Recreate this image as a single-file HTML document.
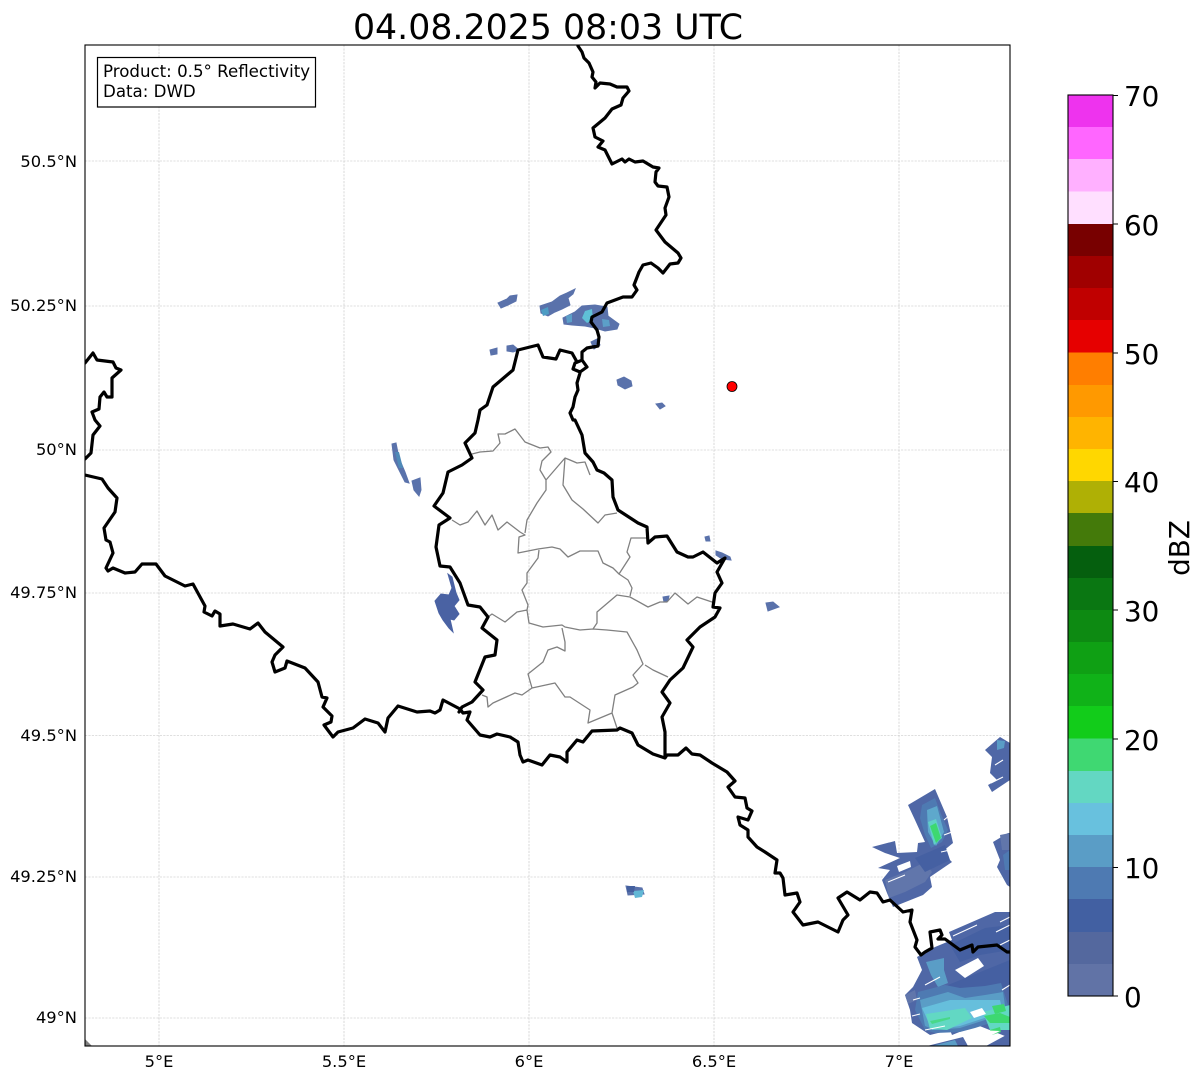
<!DOCTYPE html>
<html><head><meta charset="utf-8"><style>
html,body{margin:0;padding:0;background:#fff;width:1202px;height:1081px;overflow:hidden}
svg{display:block}
text{font-family:"DejaVu Sans",sans-serif;fill:#000}
.b{fill:none;stroke:#000;stroke-width:3.2;stroke-linejoin:round;stroke-linecap:round}
.g{fill:none;stroke:#808080;stroke-width:1.3;stroke-linejoin:round}
.w{stroke:#fff;stroke-width:1.1;fill:none}
</style></head><body>
<svg width="1202" height="1081" viewBox="0 0 1202 1081" xmlns="http://www.w3.org/2000/svg">
<defs><clipPath id="ax"><rect x="85" y="45" width="925" height="1001"/></clipPath></defs>
<rect width="1202" height="1081" fill="#fff"/>
<text x="548" y="39" font-size="34.76" text-anchor="middle">04.08.2025 08:03 UTC</text>

<g stroke="#c0c0c0" stroke-width="0.6" stroke-dasharray="2.2 1.2" fill="none">
<path d="M159 45V1046M344 45V1046M529 45V1046M714 45V1046M899 45V1046"/>
<path d="M85 161H1010M85 306H1010M85 450H1010M85 593H1010M85 735.5H1010M85 877H1010M85 1018H1010"/>
</g>

<g clip-path="url(#ax)">
<!-- radar small echoes -->
<g fill="#5a72ab" stroke="#5a72ab" stroke-width="1">
<path d="M498 303L507 299 510 296 517 295 516 301 508 305 501 308Z"/>
<path d="M540 306L552 302 560 296 567 293 575 289 573 294 568 298 570 305 562 309 555 312 548 316 541 313Z"/>
<path d="M563 318L575 312 582 306 595 305 607 307 608 316 619 324 617 329 605 331 595 328 585 326 572 325 564 324Z"/>
<path d="M591 342L597 339 600 345 594 349Z"/>
<path d="M490 350L497 348 497 354 491 355Z"/>
<path d="M507 346L513 345 519 350 513 352 507 351Z"/>
<path d="M617 380L624 377 631 381 632 386 625 389 618 385Z"/>
<path d="M656 404L662 403 665 406 660 409Z"/>
<path d="M392 444L396 443 399 458 405 472 409 483 405 482 399 470 394 460Z"/>
<path d="M412 481L420 478 421 490 419 496 414 490Z"/>
<path d="M705 537L709 536 710 541 706 541Z"/>
<path d="M716 551L722 553 730 557 731 560 722 559 716 555Z"/>
<path d="M663 597L669 596 668 601 664 602Z"/>
<path d="M766 603L773 602 779 607 768 611Z"/>
<path d="M626 886L642 888 644 894 628 895Z"/>
</g>
<g fill="#4a62a3" stroke="#4a62a3" stroke-width="1">
<path d="M448 574L452 577 456 593 459 600 454 606 459 614 454 620 450 619 453 632 449 628 443 620 439 613 435 601 441 594 449 595 452 588Z"/>
</g>
<g>
<path d="M541 310L548 307 549 314 543 316Z" fill="#4d9cc4"/>
<path d="M585 311L592 309 593 320 587 323 582 318Z" fill="#5fc0d6"/>
<path d="M566 316L572 314 572 322 567 323Z" fill="#5c9fc8"/>
<path d="M602 319L609 320 610 326 603 327Z" fill="#5c9fc8"/>
<path d="M395 452L399 452 403 468 399 468Z" fill="#4e8ab8"/>
<path d="M633 891L644 890 642 897 635 898Z" fill="#62b8d6"/>
<path d="M627 886L635 886 634 892 627 892Z" fill="#44609f"/>
</g>

<!-- SE echoes base -->
<g fill="#4f67a6">
<path d="M985 750L1000 737 1010 743 1010 780 992 792 988 785 997 780 990 773 992 757Z"/>
<path d="M908 805L935 789 947 817 953 843 942 852 952 862 930 877 932 887 923 895 893 907 887 893 882 880 890 870 878 868 900 858 885 853 872 847 895 841 897 853 917 852 918 843 925 842 915 820Z"/>
<path d="M993 842L1008 833 1010 833 1010 887 1007 885 997 867 1000 860Z"/>
<path d="M949 932L995 912 1010 912 1010 1038 977 1025 952 1035 950 1030 930 1035 912 1023 910 1010 905 995 913 987 922 970 917 957 935 947 952 940Z"/>
<path d="M927 1046L963 1037 968 1046Z"/>
</g>
<g fill="#6176ab">
<path d="M885 880L905 872 925 862 932 872 925 882 905 892 889 898Z"/>
<path d="M905 995L915 990 917 1000 908 1004Z"/>
<path d="M1000 835L1010 833 1010 850 1002 850Z"/>
</g>
<g fill="#4560a2">
<path d="M915 858L945 845 950 860 925 872Z"/>
<path d="M950 945L985 928 1010 925 1010 950 980 955 960 962Z"/>
<path d="M948 985L1010 960 1010 985 980 1000 955 1000Z"/>
</g>

<!-- teal layers -->
<path d="M997 740L1005 741 1004 748 997 750Z" fill="#5a9dc6"/>
<path d="M922 805L935 798 941 814 948 830 942 842 931 848 925 835 920 818Z" fill="#4e7ab2"/>
<path d="M927 810L937 806 944 832 936 846 928 832Z" fill="#5ea8cc"/>
<path d="M928 822L936 819 942 838 934 845Z" fill="#60d0c8"/>
<path d="M930 826L936 823 941 838 936 843Z" fill="#3dd870"/>
<path d="M1003 855L1010 850 1010 870 1005 870Z" fill="#4e7ab2"/>
<path d="M926 962L944 958 944 970 948 983 938 987 931 975Z" fill="#5a9dc6"/>
<path d="M918 992L945 985 960 988 985 986 1001 983 1008 1005 1000 1020 975 1028 960 1032 935 1033 925 1030 915 1010Z" fill="#4e7ab2"/>
<path d="M920 1000L948 992 965 998 985 995 1003 992 1006 1012 985 1020 960 1028 935 1030 925 1026Z" fill="#5a9dc6"/>
<path d="M922 1008L950 1000 985 1000 1000 1000 1003 1012 960 1026 932 1030Z" fill="#66bfdc"/>
<path d="M926 1014L965 1008 972 1018 947 1030 930 1029Z" fill="#62d8c3"/>
<path d="M983 1012L1010 1005 1010 1030 990 1030Z" fill="#62d8c3"/>
<path d="M992 1006L1004 1004 1006 1011 995 1014Z" fill="#3dd870"/>
<path d="M984 1016L1000 1013 1010 1017 1010 1023 990 1023Z" fill="#3dd870"/>
<path d="M990 1030L1000 1027 1001 1032 992 1035Z" fill="#3dd870"/>
<path d="M930 1021L950 1017 950 1019 932 1024Z" fill="#3dd870" opacity=".7"/>
<path d="M932 1046L955 1040 958 1046Z" fill="#5a9dc6"/>

<!-- white holes and streaks -->
<g fill="#fff">
<path d="M955 970L978 958 984 966 965 978Z"/>
<path d="M970 1012L982 1008 986 1014 974 1018Z"/>
<path d="M968 1046L964 1037 977 1030 1000 1031 990 1036 982 1046Z"/>
<path d="M897 866L910 861 911 867 899 872Z"/>
</g>
<path d="M986 1046L1010 1033V1046Z" fill="#4f67a6"/>
<path class="w" d="M953 936L977 925M1000 922L1010 917M996 932L1010 925M1000 945L1010 940M925 985L940 977M913 1000L920 998M912 1016L920 1014M925 1030L945 1026M1002 990L1010 985M905 875L888 882M944 820L950 815M944 835L952 832M941 852L950 850M995 765L1003 760M991 783L1003 777"/>

<!-- Luxembourg cantons -->
<path class="g" d="M472 454L480 452 493 451 500 443 498 434 505 434 515 429 525 442 540 448 548 447 551 452 542 461 540 470 546 480 546 490 537 503 527 520 525 533M546 480L565 458 570 460 577 463 585 462 590 475M565 458L563 485 572 500 583 509 598 523 605 515 617 513M452 520L460 525 468 522 477 511 485 525 492 515 498 530 507 522 520 532 525 535 519 537 518 553 538 549 552 547 560 549 568 557 580 551 598 551 603 563 613 568 619 574 630 557 627 552 631 538 647 538M619 574L628 580 632 588 630 596M539 550L538 558 527 573 527 583 522 590 528 605 527 610 517 612 505 622 492 614 488 617M527 610L529 623 543 627 562 625 565 627 580 630 593 629 597 623 597 612 617 595 630 597 648 607 660 602 667 602 675 593 688 604 697 597 715 603M593 629L607 630 627 632 637 650 643 664 633 675 638 683 633 687 615 695 612 713 617 728M562 628L565 642 565 651 557 647 548 650 543 662 528 674 532 688 555 683 565 697 570 697 590 710 588 723 612 713M645 665L653 670 668 677M532 688L522 695 515 693 493 703 488 707 487 697 482 695"/>

<!-- borders -->
<path class="b" d="M578 46L582 52 584 58 589 63 593 72 592 77 596 82 595 88 600 83 610 84 617 87 627 87 629 91 623 98 621 105 612 109 605 118 593 128 595 137 603 141 598 147 605 150 612 164 622 159 625 162 629 159 635 162 643 161 653 167 659 168 656 172 655 182 658 186 667 187 669 197 665 208 666 215 656 230 665 242 678 253 681 258 678 263 670 264 663 273 658 268 651 263 643 265 639 272 634 285 637 290 632 297 623 297 607 303 602 312 592 317 591 322 597 330 599 337 598 346 587 348 582 352 582 360 587 367 580 372 573 369 575 363 580 361 582 360M580 373L577 383 578 390 575 397 573 407 570 413 573 420 575 420 582 435 585 453 593 462 597 470 604 473 612 480 613 497 618 510 638 523 647 527 648 543 655 537 667 536 677 552 688 557 693 557 703 552 717 563 725 558 717 572 722 583 715 593 713 607 720 608 715 617 700 627 687 640 693 647 683 668 670 680 662 692 670 703 662 717 665 732 665 757"/>
<path class="b" d="M577 362L572 353 560 350 556 359 543 357 538 345 518 350 513 370 493 387 487 405 480 410 478 420 475 433 465 443 472 458 462 465 448 472 443 493 434 506 450 518 439 525 436 547 440 566 450 567 460 583 468 605 480 607 488 617 482 628 497 640 495 655 485 657 475 682 483 690 472 702 462 707 459 712"/>
<path class="b" d="M85 363L93 353 97 360 113 362 116 368 121 370 112 378 112 397 107 397 104 392 100 397 99 409 92 412 95 420 100 426 93 435 91 453 85 459"/>
<path class="b" d="M85 475L102 479 108 488 117 498 115 512 104 528 106 540 110 542 113 553 106 568 108 571 113 568 125 573 135 572 142 564 156 564 165 576 185 586 193 584 205 606 204 612 212 616 215 611 220 614 220 626 233 624 250 629 258 623 265 632 283 647 275 655 272 662 275 672 285 668 287 661 305 668 318 682 322 697 327 698 323 707 332 716 331 722 324 725 333 737 338 732 353 728 365 719 378 723 385 732 388 718 398 706 417 712 430 711 435 713 440 710 443 700 460 709 463 713 470 712 467 720 480 735 490 737 497 734 510 737 518 742 520 755 523 762 528 760 542 765 550 755 560 757 567 762 567 752 577 740 583 742 592 731 617 730 620 728 632 733 638 745 653 754 665 758 667 755 678 755 686 748 692 754 700 755 712 763 727 772 735 781 728 787 735 797 745 798 747 808 752 811 748 820 738 817 740 825 748 830 748 837 757 847 765 852 777 860 775 873 780 873 783 878 785 895 797 893 800 902 793 912 803 925 818 922 838 932 843 920 848 915 838 898 847 892 860 900 870 892 877 893 883 902 890 900 903 912 912 910 910 922 917 940 915 947 921 955 925 952 932 948 930 932 940 930 942 935 938 939 945 939 960 950 972 945 973 952 978 947 997 945 1007 952 1011 952"/>
<path d="M85 1039L92 1046H85Z" fill="#808080"/>

<circle cx="732" cy="386.5" r="5" fill="#f00" stroke="#000" stroke-width="0.8"/>
</g>

<rect x="85" y="45" width="925" height="1001" fill="none" stroke="#000" stroke-width="1.1"/>

<!-- info box -->
<rect x="97.5" y="57.5" width="218" height="49.5" fill="#fff" stroke="#000" stroke-width="1.2"/>
<text x="103" y="77" font-size="16.65">Product: 0.5° Reflectivity</text>
<text x="103" y="97" font-size="16.65">Data: DWD</text>

<!-- axis labels -->
<g font-size="16.3" text-anchor="end">
<text x="77" y="167">50.5°N</text>
<text x="77" y="311">50.25°N</text>
<text x="77" y="455">50°N</text>
<text x="77" y="598">49.75°N</text>
<text x="77" y="741">49.5°N</text>
<text x="77" y="882">49.25°N</text>
<text x="77" y="1023">49°N</text>
</g>
<g font-size="16.3" text-anchor="middle">
<text x="159" y="1067">5°E</text>
<text x="344" y="1067">5.5°E</text>
<text x="529" y="1067">6°E</text>
<text x="714" y="1067">6.5°E</text>
<text x="899" y="1067">7°E</text>
</g>

<!-- colorbar -->
<g shape-rendering="crispEdges">
<rect x="1068" y="95" width="45" height="33" fill="#ee33ee"/>
<rect x="1068" y="127" width="45" height="33" fill="#ff66ff"/>
<rect x="1068" y="159" width="45" height="33" fill="#ffb0ff"/>
<rect x="1068" y="191.5" width="45" height="33" fill="#ffdfff"/>
<rect x="1068" y="224" width="45" height="33" fill="#780000"/>
<rect x="1068" y="256" width="45" height="33" fill="#a00000"/>
<rect x="1068" y="288" width="45" height="33" fill="#c00000"/>
<rect x="1068" y="320" width="45" height="33" fill="#e60000"/>
<rect x="1068" y="352.5" width="45" height="33" fill="#ff7e00"/>
<rect x="1068" y="385" width="45" height="33" fill="#ff9900"/>
<rect x="1068" y="417" width="45" height="33" fill="#ffb400"/>
<rect x="1068" y="449" width="45" height="33" fill="#ffd700"/>
<rect x="1068" y="481" width="45" height="33" fill="#afb005"/>
<rect x="1068" y="513" width="45" height="33" fill="#447a0a"/>
<rect x="1068" y="546" width="45" height="33" fill="#055f0e"/>
<rect x="1068" y="578" width="45" height="33" fill="#0a7712"/>
<rect x="1068" y="610" width="45" height="33" fill="#0d8a12"/>
<rect x="1068" y="642" width="45" height="33" fill="#0fa014"/>
<rect x="1068" y="674" width="45" height="33" fill="#10b218"/>
<rect x="1068" y="706" width="45" height="33" fill="#12cc1a"/>
<rect x="1068" y="738.5" width="45" height="33" fill="#3fd872"/>
<rect x="1068" y="771" width="45" height="33" fill="#63d7c2"/>
<rect x="1068" y="803" width="45" height="33" fill="#68c1de"/>
<rect x="1068" y="835" width="45" height="33" fill="#5a9dc6"/>
<rect x="1068" y="867" width="45" height="33" fill="#4e7ab2"/>
<rect x="1068" y="899" width="45" height="33" fill="#4260a2"/>
<rect x="1068" y="932" width="45" height="33" fill="#54689e"/>
<rect x="1068" y="964" width="45" height="32.5" fill="#6173a6"/>
</g>
<rect x="1068" y="95" width="45" height="901" fill="none" stroke="#000" stroke-width="1.1"/>
<path d="M1113 95.5h5M1113 224h5M1113 353h5M1113 481.5h5M1113 610h5M1113 739h5M1113 867.5h5M1113 996h5" stroke="#000" stroke-width="1.1"/>
<g font-size="27.78">
<text x="1124" y="106">70</text>
<text x="1124" y="235">60</text>
<text x="1124" y="364">50</text>
<text x="1124" y="492">40</text>
<text x="1124" y="621">30</text>
<text x="1124" y="750">20</text>
<text x="1124" y="878">10</text>
<text x="1124" y="1007">0</text>
</g>
<text transform="translate(1189 548) rotate(-90)" font-size="27.78" text-anchor="middle">dBZ</text>
</svg>
</body></html>
